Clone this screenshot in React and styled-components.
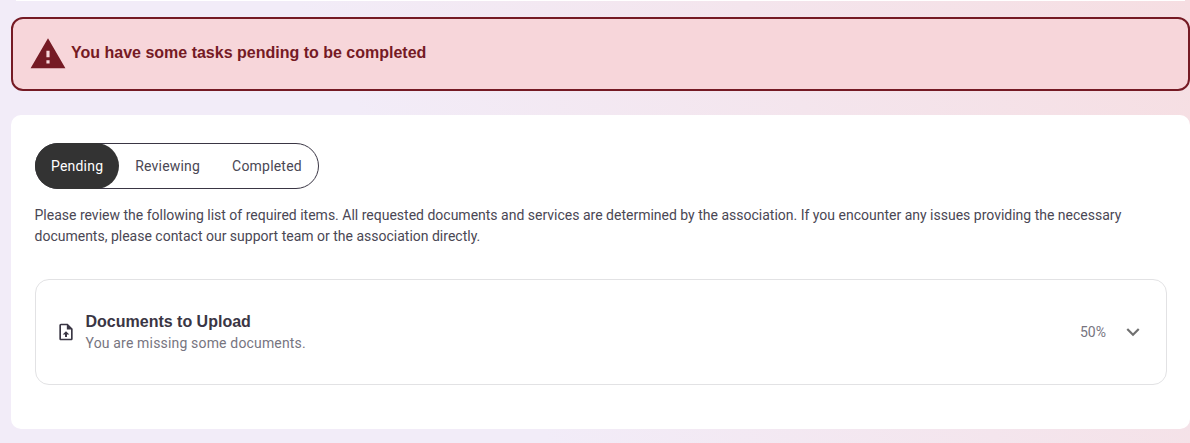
import React from "react";
import styled, { createGlobalStyle } from "styled-components";

const GlobalStyle = createGlobalStyle`
  html, body {
    margin: 0;
    padding: 0;
    height: 100%;
    overflow: hidden;
  }
  body {
    font-family: Roboto, "Liberation Sans", Arial, sans-serif;
  }
`;

const App = () => {
  return (
    <>
      <GlobalStyle />
      <StPage>
        <StTopStrip />
        <StAlert>
          <StWarning viewBox="0 0 24 24">
            <path d="M1 21h22L12 2 1 21zm12-3h-2v-2h2v2zm0-4h-2v-4h2v4z" />
          </StWarning>
          <StAlertText>You have some tasks pending to be completed</StAlertText>
        </StAlert>

        <StCard>
          <StTabs>
            <StTab $active>Pending</StTab>
            <StTab>Reviewing</StTab>
            <StTab>Completed</StTab>
          </StTabs>
          <StIntro>
            Please review the following list of required items. All requested documents and services are determined by the association. If you encounter any issues providing the necessary documents, please contact our support team or the association directly.
          </StIntro>
          <StAccordion>
            <StFileIcon viewBox="0 0 24 24">
              <path d="M14 2H6c-1.1 0-2 .9-2 2v16c0 1.1.9 2 2 2h12c1.1 0 2-.9 2-2V8l-6-6zm4 18H6V4h7v5h5v11z" />
              <path d="M12 11l-4 4h2.8v3h2.4v-3H16z" />
            </StFileIcon>
            <StHeading>
              <StTitle>Documents to Upload</StTitle>
              <StSubtitle>You are missing some documents.</StSubtitle>
            </StHeading>
            <StPercent>50%</StPercent>
            <StChevron viewBox="0 0 24 24">
              <path d="M7.41 8.59 12 13.17l4.59-4.58L18 10l-6 6-6-6z" />
            </StChevron>
          </StAccordion>
        </StCard>
      </StPage>
    </>
  );
};

export default App;

const StPage = styled.div`
  height: 443px;
  box-sizing: border-box;
  padding-left: 11px;
  overflow: hidden;
  background: linear-gradient(60deg, #f2ecf8 0%, #f2ecf8 38%, #f6dee2 100%);
`;

const StTopStrip = styled.div`
  height: 1px;
  margin: 0 5px 16px 5px;
  background-color: #fff;
`;

const StAlert = styled.div`
  height: 74px;
  box-sizing: border-box;
  display: flex;
  align-items: center;
  gap: 4px;
  padding: 0 0 1px 16px;
  border: 2px solid #751a24;
  border-radius: 12px;
  background-color: #f7d6da;
`;

const StWarning = styled.svg`
  width: 38px;
  height: 38px;
  fill: #751a24;
  flex-shrink: 0;
`;

const StAlertText = styled.span`
  padding-bottom: 2px;
  font-family: "Liberation Sans", Arial, sans-serif;
  font-size: 16px;
  font-weight: 700;
  color: #751a24;
`;

const StCard = styled.div`
  margin-top: 24px;
  height: 314px;
  box-sizing: border-box;
  padding: 28px 23px 0 24px;
  background-color: #fff;
  border-radius: 10px;
`;

const StTabs = styled.div`
  display: inline-flex;
  width: 284px;
  height: 46px;
  box-sizing: border-box;
  border: 1px solid #3a3644;
  border-radius: 23px;
`;

const StTab = styled.div`
  display: flex;
  align-items: center;
  justify-content: center;
  padding: 0 16px;
  margin: ${(props) => (props.$active ? "-1px 0 -1px -1px" : "0")};
  border-radius: 23px;
  font-size: 14px;
  letter-spacing: 0.2px;
  color: ${(props) => (props.$active ? "#fff" : "#4a4754")};
  background-color: ${(props) => (props.$active ? "#333333" : "transparent")};
`;

const StIntro = styled.p`
  margin: 16px 0 0 -0.5px;
  font-size: 14px;
  line-height: 21px;
  color: #4a4754;
`;

const StAccordion = styled.div`
  margin-top: 32px;
  height: 106px;
  box-sizing: border-box;
  display: flex;
  align-items: center;
  padding: 0 20px 0 20px;
  border: 1px solid #e2e2e4;
  border-radius: 14px;
`;

const StFileIcon = styled.svg`
  width: 20px;
  height: 20px;
  fill: #3a3644;
  flex-shrink: 0;
`;

const StHeading = styled.div`
  margin-left: 9.5px;
  flex: 1;
`;

const StTitle = styled.div`
  font-family: "Liberation Sans", Arial, sans-serif;
  font-size: 16px;
  font-weight: 700;
  line-height: 22px;
  color: #3a3644;
`;

const StSubtitle = styled.div`
  font-size: 14px;
  line-height: 20px;
  letter-spacing: 0.17px;
  color: #77757f;
`;

const StPercent = styled.span`
  font-size: 14px;
  color: #77757f;
`;

const StChevron = styled.svg`
  width: 26px;
  height: 26px;
  margin-left: 14px;
  fill: #707070;
`;
